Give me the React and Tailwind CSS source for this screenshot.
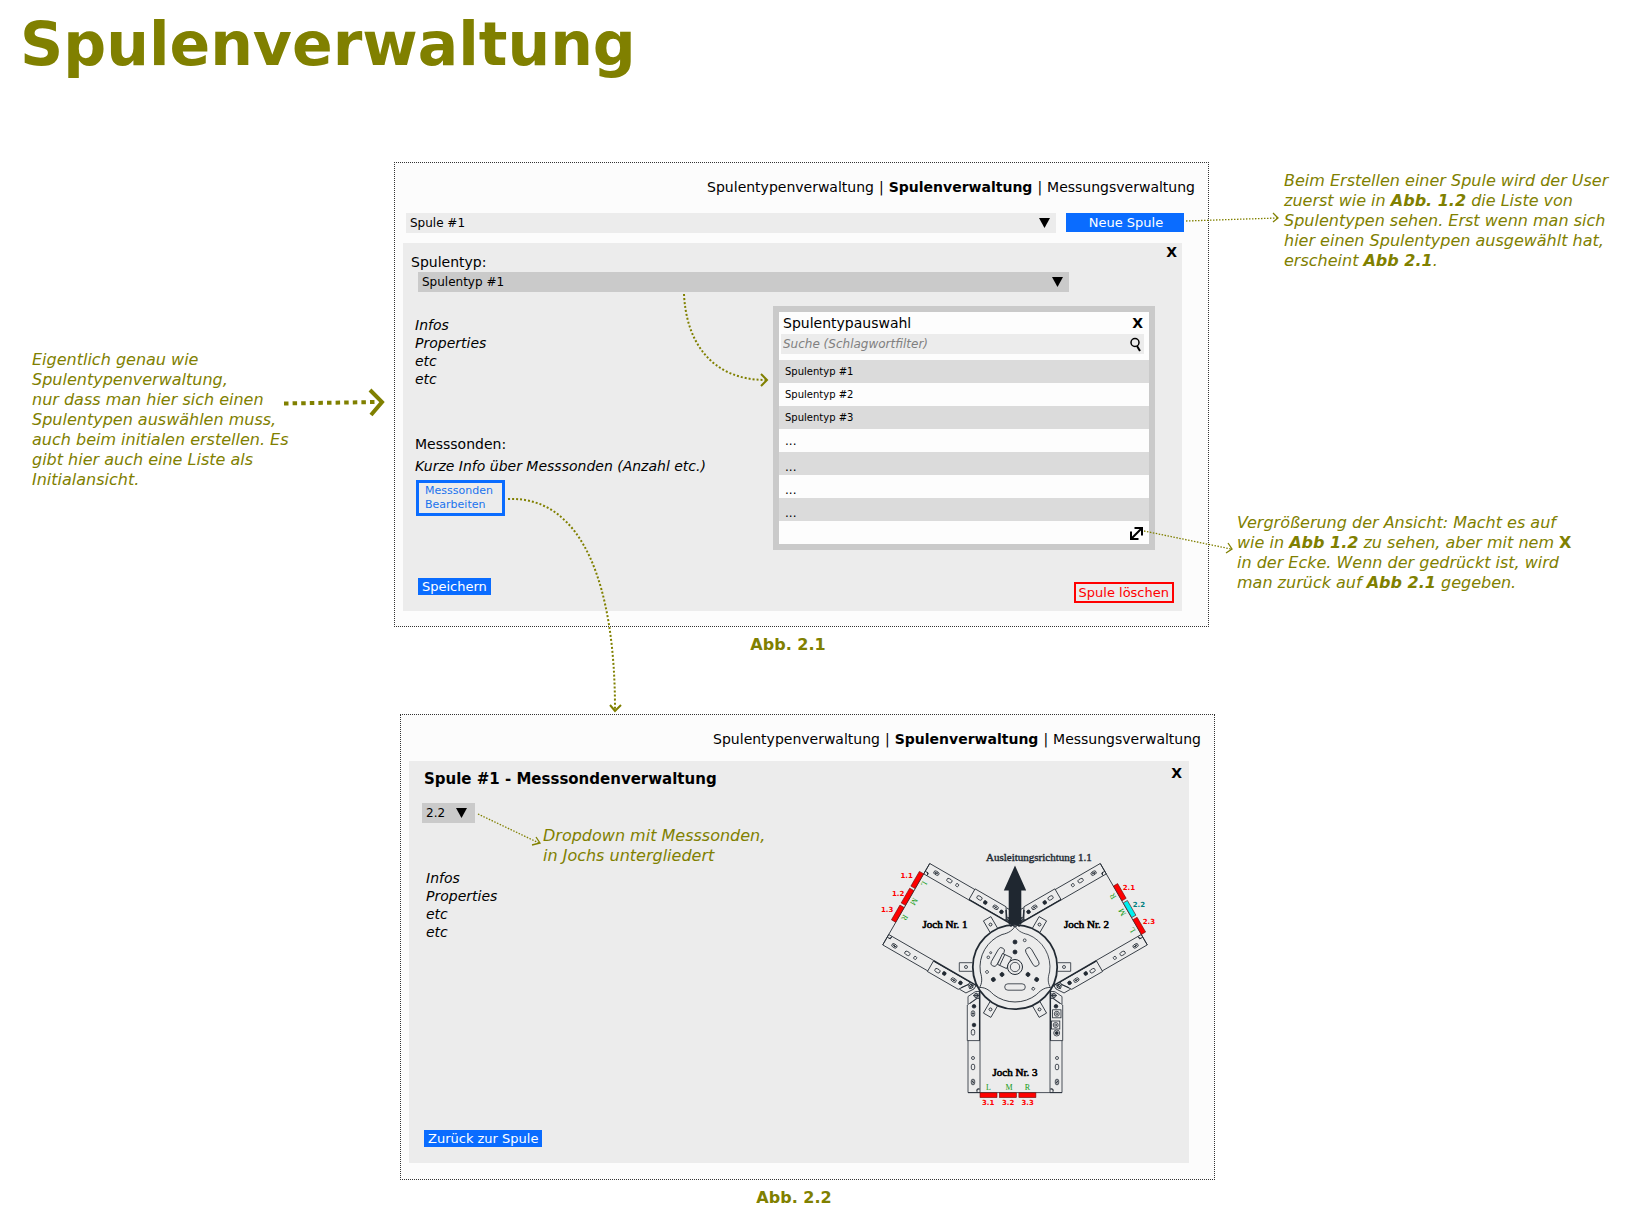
import React from "react";

function Connector({ className, width, height, line, head, stroke = 2, dash = "2 2" }) {
  return (
    <svg
      aria-hidden="true"
      className={`pointer-events-none absolute z-10 overflow-visible ${className}`}
      width={width}
      height={height}
      fill="none"
      stroke="#808000"
      strokeWidth={stroke}
    >
      <path d={line} strokeDasharray={dash} />
      <path d={head} />
    </svg>
  );
}

function Dropdown({ id, label, options, className = "", arrow = "right-1.5", tone }) {
  return (
    <div className={`relative ${className}`}>
      <select
        id={id}
        aria-label={label}
        className={`block h-5 w-full appearance-none rounded-none pl-1 text-xs leading-5 text-black ${tone}`}
      >
        {options.map((o) => (
          <option key={o}>{o}</option>
        ))}
      </select>
      <svg
        aria-hidden="true"
        className={`pointer-events-none absolute top-[5px] ${arrow}`}
        width="11"
        height="10"
      >
        <path d="M0 0H11L5.5 10Z" />
      </svg>
    </div>
  );
}

function Nav() {
  return (
    <nav className="flex justify-end gap-[5px] pr-[13px] text-sm leading-5">
      <a href="#spulentypen">Spulentypenverwaltung</a>
      <span>|</span>
      <a href="#spulen" aria-current="page" className="font-bold">
        Spulenverwaltung
      </a>
      <span>|</span>
      <a href="#messungen">Messungsverwaltung</a>
    </nav>
  );
}

function Infos({ className = "" }) {
  return (
    <div className={`text-sm leading-[18px] italic ${className}`}>
      <p>Infos</p>
      <p>Properties</p>
      <p>etc</p>
      <p>etc</p>
    </div>
  );
}

const ROWS = ["Spulentyp #1", "Spulentyp #2", "Spulentyp #3", "...", "...", "...", "..."];

function TypeDialog() {
  return (
    <section
      aria-label="Spulentypauswahl"
      className="w-[382px] shrink-0 border-6 border-[#cacaca] bg-[#fdfdfd]"
    >
      <header className="flex h-[22px] items-center justify-between pr-1.5 pl-1 text-sm leading-5">
        <h2>Spulentypauswahl</h2>
        <button type="button" aria-label="Auswahl schließen" className="font-bold">
          X
        </button>
      </header>
      <div className="mr-[5px] ml-0.5 flex h-5 items-center bg-[#ececec] pr-0.5 pl-0.5">
        <input
          type="text"
          aria-label="Suche"
          placeholder="Suche (Schlagwortfilter)"
          className="min-w-0 flex-1 text-xs italic outline-none placeholder:text-[#808080]"
        />
        <svg aria-hidden="true" width="12" height="15" fill="none" stroke="#000">
          <circle cx="5" cy="5.5" r="4" strokeWidth="1.5" />
          <path d="M7 9L10 14" strokeWidth="2" />
        </svg>
      </div>
      <ul className="mt-1.5">
        {ROWS.map((row, i) => (
          <li
            key={i}
            className={`flex h-[23px] items-center pl-1.5 ${i % 2 === 0 ? "bg-[#dbdbdb]" : ""} ${
              i > 2 ? "text-xs" : "text-[10px]"
            } ${i > 3 ? "pt-1.5" : ""}`}
          >
            {row}
          </li>
        ))}
      </ul>
      <footer className="flex h-[23px] items-center justify-end pt-0.5 pr-[5px]">
        <button type="button" aria-label="Ansicht vergrößern">
          <svg width="15" height="15" fill="none" stroke="#000" strokeWidth="2">
            <path d="M2.5 12.5L12.5 2.5M5.5 2H13V9.5M2 5.5V13H9.5" />
          </svg>
        </button>
      </footer>
    </section>
  );
}

/* One side plate of a yoke, drawn left of the axis and pointing down. */
function Plate({ brackets }) {
  return (
    <g>
      <path d="M-47 73.5V125.6H-35V73.5" />
      <path d="M-47.7 73.6V38L-38.5 31.5H-35.5V73.6Z" />
      <path d="M-47 37V29.5L-39.5 24.5H-35.5M-45 36.5L-38 31.5" />
      <path d="M-35.3 22V73.6" strokeWidth="1.5" />
      <circle cx="-42" cy="91" r="1.5" />
      <rect x="-43.7" y="97.2" width="3.4" height="5.6" rx="1.7" />
      <rect x="-43.7" y="112.2" width="3.4" height="5.6" rx="1.7" />
      <path d="M-43 114L-41 116M-42 113V117" />
      <path d="M-38 125.6V122H-35M-38.5 123.5L-36 121.5" />
      <circle cx="-41" cy="39.3" r="1.8" fill="#222a33" />
      <circle cx="-39" cy="28.5" r="2" />
      <path d="M-42 28.5H-36M-39 25.5V31.5M-37 26V31" />
      {brackets ? (
        <g>
          <rect x="-46" y="42.8" width="8.4" height="8" />
          <circle cx="-41.8" cy="46.8" r="2.5" />
          <circle cx="-41.8" cy="46.8" r="1" />
          <rect x="-44.8" y="54" width="8.4" height="8" />
          <circle cx="-40.7" cy="58" r="2.5" />
          <circle cx="-40.7" cy="58" r="1" />
          <circle cx="-41.7" cy="66" r="3" />
          <circle cx="-41.7" cy="66" r="1.5" fill="#222a33" />
        </g>
      ) : (
        <g>
          <rect x="-43.7" y="43.8" width="3.4" height="5.6" rx="1.7" />
          <path d="M-42 44.5V49M-43 46.5H-41" />
          <circle cx="-41" cy="58" r="1.8" fill="#222a33" />
          <rect x="-43.7" y="62.5" width="3.4" height="5.6" rx="1.7" />
        </g>
      )}
    </g>
  );
}

function Yoke({ angle, fills, letters, brackets }) {
  return (
    <g transform={`rotate(${angle})`}>
      <Plate />
      <g transform="scale(-1 1)">
        <Plate brackets={brackets} />
      </g>
      <path d="M-47 125.6H47" />
      {[-35, -15.6, 3.9].map((x, i) => (
        <rect key={x} x={x} y="125.8" width="17" height="4.8" fill={fills[i]} stroke="#6a1010" strokeWidth="0.6" />
      ))}
      <g fill="#129a12" stroke="none" fontSize="8" textAnchor="middle" fontFamily="Liberation Serif, serif">
        {[-26.5, -6, 12.3].map((x, i) => (
          <text key={x} x={x} y="122.8">
            {letters[i]}
          </text>
        ))}
      </g>
    </g>
  );
}

const RED = ["#ff0000", "#ff0000", "#ff0000"];
const LMR = ["L", "M", "R"];

const SENSORS = [
  ["1.1", -114.5, -88.7],
  ["1.2", -123, -70.7],
  ["1.3", -134, -55],
  ["2.1", 107.7, -77],
  ["2.2", 117.7, -60.4],
  ["2.3", 127.7, -43],
  ["3.1", -33, 138],
  ["3.2", -13, 138],
  ["3.3", 6.5, 138],
];

function CoilDiagram({ className }) {
  return (
    <svg
      role="img"
      aria-label="Spule mit drei Jochen und neun Messsonden"
      className={className}
      width="290"
      height="260"
      viewBox="-145 -119 290 260"
      fill="none"
      stroke="#222a33"
      strokeWidth="0.8"
    >
      <Yoke angle={120} fills={RED} letters={LMR} />
      <Yoke angle={-120} fills={["#ff0000", "#00f0f0", "#ff0000"]} letters={LMR} />
      <Yoke angle={0} fills={RED} letters={LMR} brackets />

      {[0, 60, 120, 180, 240, 300].map((a) => (
        <g key={a} transform={`rotate(${a})`}>
          <path d="M42.5 -4.3H55.7V4.3H42.5" />
          <circle cx="49" cy="0" r="1.5" />
        </g>
      ))}

      <circle r="42.2" fill="#ececec" strokeWidth="1.8" />
      {[0, 120, 240].map((a) => (
        <g key={a} transform={`rotate(${a})`}>
          <path d="M0 -41C2 -37 6 -34 13 -32.5A35 35 0 0 1 34.6 5C32.4 11.8 33 16.8 35.5 20.5" />
          <circle cx="0" cy="-25" r="2" fill="#222a33" />
          <circle cx="0" cy="-15" r="2" fill="#222a33" />
          <circle cx="9.7" cy="-26.7" r="1.4" />
          <rect x="-10.3" y="16.8" width="20.6" height="6.4" rx="3.2" />
        </g>
      ))}
      <circle cx="-26.7" cy="-9.7" r="1.3" />
      <circle cx="-24.3" cy="-14.3" r="1" />
      <g transform="rotate(25)">
        <rect x="-17" y="-7" width="10" height="12" fill="#ececec" />
        <path d="M-14.5 -7V5" />
      </g>
      <circle r="7.5" fill="#ececec" strokeWidth="1" />
      <circle r="4.7" />

      <path d="M-9 -57V-47L-3 -43M9 -57V-47L3 -43M-10 -47H10" />
      <path d="M0 -101.5L11.2 -76.5H6.3V-43H-6.3V-76.5H-11.2Z" fill="#1f2730" stroke="none" />
      <circle cx="0" cy="-42" r="2" />
      <circle cx="-4" cy="-42" r="1.4" />
      <circle cx="4" cy="-42" r="1.4" />

      <g fontFamily="Liberation Serif, serif" fontSize="11">
        <text x="-29" y="-106" fill="#222a33" strokeWidth="0.4">
          Ausleitungsrichtung 1.1
        </text>
        <g fill="#000" stroke="#000" strokeWidth="0.6" textAnchor="middle">
          <text x="-70" y="-39">Joch Nr. 1</text>
          <text x="71.5" y="-39">Joch Nr. 2</text>
          <text x="0" y="108.5">Joch Nr. 3</text>
        </g>
      </g>
      <g fontSize="7" fontWeight="bold" stroke="none">
        {SENSORS.map(([name, x, y]) => (
          <text key={name} x={x} y={y} fill={name === "2.2" ? "#008080" : "#ff0000"}>
            {name}
          </text>
        ))}
      </g>
    </svg>
  );
}

function Caption({ children }) {
  return (
    <figcaption className="mt-2 pr-[27px] text-center text-base leading-5 font-bold text-[#808000]">
      {children}
    </figcaption>
  );
}

function CoilScreen() {
  return (
    <figure className="relative">
      <div className="border border-dotted border-[#333] bg-[#fcfcfc] pt-3.5 pb-[15px]">
        <Nav />
        <div className="mt-4 flex items-start gap-2.5 pr-6 pl-[11px]">
          <Dropdown id="spule" label="Spule" options={["Spule #1"]} className="flex-1" tone="bg-[#ececec]" />
          <button
            type="button"
            className="h-[19px] w-[118px] bg-[#0a6cff] pl-0.5 text-[13px] leading-[19px] text-white"
          >
            Neue Spule
          </button>
        </div>
        <div className="relative mt-2.5 mr-[26px] ml-2 bg-[#ececec] px-2 pt-[9px] pb-2">
          <button
            type="button"
            aria-label="Spule schließen"
            className="absolute top-0 right-[5px] text-sm leading-[18px] font-bold"
          >
            X
          </button>
          <label htmlFor="spulentyp" className="block text-sm leading-5">
            Spulentyp:
          </label>
          <Dropdown
            id="spulentyp"
            label="Spulentyp"
            options={["Spulentyp #1"]}
            className="mr-[105px] ml-[7px]"
            tone="bg-[#cacaca]"
          />
          <div className="flex items-start justify-between pt-3.5 pr-[19px] pl-1">
            <div className="pt-2.5">
              <Infos />
              <div className="mt-[45px] text-sm leading-[22px]">
                <p>Messsonden:</p>
                <p className="italic">Kurze Info über Messsonden (Anzahl etc.)</p>
              </div>
              <button
                type="button"
                className="mt-[3px] ml-px block w-[89px] border-3 border-[#0a6cff] px-1.5 py-px text-left text-[11px] leading-[14px] text-[#1a73ee]"
              >
                Messsonden
                <br />
                Bearbeiten
              </button>
            </div>
            <TypeDialog />
          </div>
          <div className="mt-7 flex items-start justify-between pl-[7px]">
            <button type="button" className="bg-[#0a6cff] px-1 text-[13px] leading-[17px] text-white">
              Speichern
            </button>
            <button
              type="button"
              className="mt-1 border-2 border-[#f00] px-[3px] text-[13px] leading-[17px] text-[#f00]"
            >
              Spule löschen
            </button>
          </div>
        </div>
      </div>
      <Caption>Abb. 2.1</Caption>

      <Connector
        className="top-[132px] left-[288px]"
        width="88"
        height="94"
        line="M2 0C4 46 28 86 84 86"
        head="M79 80L85 86L79 92"
      />
      <Connector
        className="top-[336px] left-[112px]"
        width="116"
        height="216"
        line="M2 1C79 -2 109 92 109 211"
        head="M104 207L109 213L115 207"
      />
      <Connector
        className="top-[50px] -right-[70px]"
        width="94"
        height="14"
        line="M1 9L92 6"
        head="M88 1L93 6L88 10"
        stroke="1.3"
        dash="1.5 1.5"
      />
      <Connector
        className="top-[366px] -right-[24px]"
        width="90"
        height="28"
        line="M1 3L88 21"
        head="M85 15L89 21L83 25"
        stroke="1.3"
        dash="1.5 1.5"
      />
    </figure>
  );
}

function SensorScreen() {
  return (
    <figure className="relative mt-[59px] -mr-1.5 ml-1.5">
      <div className="border border-dotted border-[#333] bg-[#fcfcfc] pt-3.5 pb-4">
        <Nav />
        <div className="relative mt-3 mr-[25px] ml-2 bg-[#ececec] px-[15px] pt-2 pb-4">
          <button
            type="button"
            aria-label="Messsondenverwaltung schließen"
            className="absolute top-[3px] right-[7px] text-sm leading-[18px] font-bold"
          >
            X
          </button>
          <h2 className="text-[15px] leading-5 font-bold">Spule #1 - Messsondenverwaltung</h2>
          <div className="flex items-start justify-between pr-3.5">
            <div className="pt-3.5">
              <Dropdown
                id="messsonde"
                label="Messsonde"
                options={["2.2", "1.1", "1.2", "1.3", "2.1", "2.3", "3.1", "3.2", "3.3"]}
                className="-ml-0.5 w-[53px]"
                arrow="right-2"
                tone="bg-[#cacaca]"
              />
              <p className="mt-[3px] ml-[119px] text-base leading-5 text-[#808000] italic">
                Dropdown mit Messsonden,
                <br />
                in Jochs untergliedert
              </p>
              <Infos className="mt-[3px] pl-0.5" />
            </div>
            <CoilDiagram className="mt-[59px]" />
          </div>
          <button
            type="button"
            className="mt-[22px] block bg-[#0a6cff] px-1 text-[13px] leading-[17px] text-white"
          >
            Zurück zur Spule
          </button>
        </div>
      </div>
      <Caption>Abb. 2.2</Caption>
      <Connector
        className="top-[98px] left-[76px]"
        width="66"
        height="38"
        line="M2 2L63 31"
        head="M60 25L64 31L56 33"
        stroke="1.3"
        dash="1.5 1.5"
      />
    </figure>
  );
}

export default function App() {
  return (
    <div className="min-h-screen bg-white font-['DejaVu_Sans',Verdana,sans-serif] text-black">
      <h1 className="pt-3.5 pl-5 text-6xl leading-[60px] font-bold text-[#808000]">Spulenverwaltung</h1>
      <main className="mt-[88px] grid grid-cols-[394px_minmax(0,1fr)_426px]">
        <aside className="relative">
          <p className="pt-[188px] pl-8 text-base leading-5 whitespace-nowrap text-[#808000] italic">
            Eigentlich genau wie
            <br />
            Spulentypenverwaltung,
            <br />
            nur dass man hier sich einen
            <br />
            Spulentypen auswählen muss,
            <br />
            auch beim initialen erstellen. Es
            <br />
            gibt hier auch eine Liste als
            <br />
            Initialansicht.
          </p>
          <Connector
            className="top-[226px] right-1.5"
            width="104"
            height="28"
            line="M0 15.5L92 14"
            head="M86 2L98 14L87 27"
            stroke="4"
            dash="4.5 4.1"
          />
        </aside>
        <div>
          <CoilScreen />
          <SensorScreen />
        </div>
        <aside className="pt-[9px] text-base leading-5 whitespace-nowrap text-[#808000] italic">
          <p className="pl-[75px]">
            Beim Erstellen einer Spule wird der User
            <br />
            zuerst wie in <b>Abb. 1.2</b> die Liste von
            <br />
            Spulentypen sehen. Erst wenn man sich
            <br />
            hier einen Spulentypen ausgewählt hat,
            <br />
            erscheint <b>Abb 2.1</b>.
          </p>
          <p className="mt-[242px] pl-7">
            Vergrößerung der Ansicht: Macht es auf
            <br />
            wie in <b>Abb 1.2</b> zu sehen, aber mit nem <b className="not-italic">X</b>
            <br />
            in der Ecke. Wenn der gedrückt ist, wird
            <br />
            man zurück auf <b>Abb 2.1</b> gegeben.
          </p>
        </aside>
      </main>
    </div>
  );
}
